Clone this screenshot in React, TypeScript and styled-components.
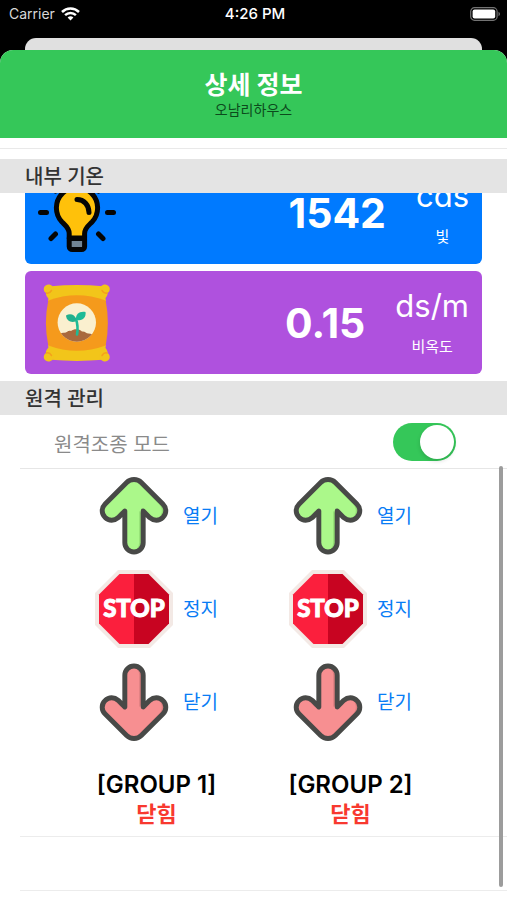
import React, { useId, useState } from "react";
import styled, { createGlobalStyle } from "styled-components";

const GlobalStyle = createGlobalStyle`
  * { box-sizing: border-box; }
  body {
    margin: 0;
    background: #000;
    font-family: Inter, "Noto Sans CJK KR", sans-serif;
    color: #000;
  }
  h1, h2, h3, p { margin: 0; }
`;

const Screen = styled.div`
  display: flex;
  flex-direction: column;
  min-height: 100vh;
`;

const StatusBar = styled.header`
  display: grid;
  grid-template-columns: 1fr auto 1fr;
  align-items: center;
  height: 27px;
  margin-bottom: 11px;
  padding: 0 6px 0 9px;
  color: #fff;
  font-size: 14px;
`;

const Carrier = styled.div`
  display: flex;
  align-items: center;
  gap: 6px;
  color: #d8d8d8;
`;

const Clock = styled.time`
  font-size: 15px;
  font-weight: 500;
`;

const BatterySlot = styled.div`
  display: flex;
  justify-content: flex-end;
`;

const BackSheet = styled.div`
  height: 12px;
  margin: 0 25px;
  border-radius: 11px 11px 0 0;
  background: #e0e0e0;
`;

const Sheet = styled.main`
  display: flex;
  flex: 1;
  flex-direction: column;
  overflow: hidden;
  border-radius: 13px 13px 0 0;
  background: #fff;
`;

const TitleBar = styled.div`
  display: flex;
  flex-direction: column;
  align-items: center;
  height: 88px;
  padding-top: 20px;
  background: #35c759;
`;

const Title = styled.h1`
  color: #fff;
  font-size: 25px;
  font-weight: 700;
  line-height: 30px;
`;

const Subtitle = styled.p`
  color: #0c4a1c;
  font-size: 14px;
  font-weight: 400;
  line-height: 20px;
`;

const TopRule = styled.div`
  height: 11px;
  margin-bottom: 10px;
  border-bottom: 1px solid #e9e9e9;
`;

const SectionTitle = styled.h2`
  height: 34px;
  padding: 2px 0 0 25px;
  background: #e4e4e4;
  color: #333;
  font-size: 20px;
  font-weight: 500;
  line-height: 32px;
`;

const CardViewport = styled.div`
  overflow: hidden;
  padding: 0 25px 7px;
`;

const CardList = styled.div`
  display: flex;
  flex-direction: column;
  gap: 7px;
  margin-top: -32px;
`;

const Card = styled.article<{ $color: string }>`
  display: flex;
  align-items: center;
  height: 103px;
  padding: 0 13px;
  border-radius: 6px;
  background: ${(p) => p.$color};
  color: #fff;
`;

const Reading = styled.strong`
  margin-left: auto;
  margin-right: 30px;
  font-size: 41px;
  font-weight: 700;
  line-height: 36px;
`;

const UnitBlock = styled.div`
  display: flex;
  flex-direction: column;
  align-items: center;
  gap: 12px;
`;

const Unit = styled.span`
  font-size: 31px;
  font-weight: 400;
  line-height: 36px;
`;

const Caption = styled.span`
  font-size: 15px;
  line-height: 22px;
`;

const Remote = styled.section`
  position: relative;
  display: flex;
  flex: 1;
  flex-direction: column;
  padding-left: 20px;
`;

const ModeRow = styled.label`
  display: flex;
  align-items: center;
  justify-content: space-between;
  height: 54px;
  padding: 0 51px 0 34px;
  border-bottom: 1px solid #e6e6e6;
  color: #8a8a8a;
  font-size: 20px;
`;

const ModeText = styled.span`
  padding-top: 4px;
`;

const Switch = styled.input`
  appearance: none;
  display: flex;
  align-items: center;
  width: 63px;
  height: 38px;
  margin: 0;
  padding: 2px;
  border-radius: 19px;
  background: #d8d8dc;
  cursor: pointer;

  &::before {
    content: "";
    width: 34px;
    height: 34px;
    border-radius: 50%;
    background: #fff;
    box-shadow: 0 2px 4px rgba(0, 0, 0, 0.15);
  }
  &:checked {
    justify-content: flex-end;
    background: #35c759;
  }
`;

const GroupRow = styled.div`
  height: 367px;
  margin-left: -20px;
  padding-top: 8px;
`;

const Groups = styled.div`
  display: grid;
  grid-template-columns: 1fr 1fr;
  max-width: 388px;
  margin: 0 auto;
`;

const Group = styled.div`
  display: flex;
  flex-direction: column;
  align-items: center;
  gap: 15px;
`;

const Action = styled.button`
  display: flex;
  align-items: center;
  gap: 10px;
  padding: 0;
  border: 0;
  background: none;
  color: #087cf5;
  font: inherit;
  font-size: 19px;
  line-height: 24px;
  cursor: pointer;
`;

const ActionText = styled.span`
  padding-top: 2px;
`;

const GroupLabel = styled.div`
  padding-top: 15px;
  text-align: center;
`;

const GroupName = styled.h3`
  font-size: 24px;
  font-weight: 600;
  line-height: 28px;
`;

const GroupState = styled.p`
  color: #f8392f;
  font-size: 22px;
  font-weight: 700;
  line-height: 30px;
`;

const EmptyRow = styled.div`
  height: 55px;
  border-top: 1px solid #ececec;
  border-bottom: 1px solid #ececec;
`;

const ScrollThumb = styled.div`
  position: absolute;
  top: 51px;
  right: 4px;
  bottom: 13px;
  width: 4px;
  border-radius: 2px;
  background: #9c9c9c;
`;

const WifiIcon = () => (
  <svg width="19" height="14" viewBox="0 0 19 14" aria-hidden="true">
    <g fill="none" stroke="#fff" strokeWidth="2.5">
      <path d="M1 5a12.2 12.2 0 0 1 17 0" />
      <path d="M4.1 8.2a7.8 7.8 0 0 1 10.8 0" />
    </g>
    <path d="M6.6 10.6a4.2 4.2 0 0 1 5.8 0L9.5 13.6Z" fill="#fff" />
  </svg>
);

const BatteryIcon = () => (
  <svg width="31" height="14" viewBox="0 0 31 14" aria-hidden="true">
    <rect x="0.7" y="0.7" width="26.4" height="12.6" rx="3.8" fill="none" stroke="#737373" strokeWidth="1.2" />
    <rect x="2.6" y="2.5" width="22.6" height="9" rx="2" fill="#fff" />
    <path d="M28.5 4.8c2 .8 2 3.6 0 4.4Z" fill="#737373" />
  </svg>
);

const BulbIcon = () => (
  <svg width="78" height="78" viewBox="0 0 78 78" aria-hidden="true">
    <path
      d="M31.2 64V59.5C31.2 54 27 51 24 48a20.6 20.6 0 1 1 30 0c-3 3-7.4 6-7.4 11.5V64Z"
      fill="#ffc10a"
      stroke="#050505"
      strokeWidth="5"
      strokeLinejoin="round"
    />
    <path d="M31.2 64.5h15.400v8a3 3 0 0 1-3 3h-9.400a3 3 0 0 1-3-3Z" fill="#718493" stroke="#050505" strokeWidth="5" strokeLinejoin="round" />
    <g fill="none" stroke="#050505" strokeWidth="5" strokeLinecap="round">
      <path d="M39 25.500c7 0 12 5.500 12 13" />
      <path d="M2.500 38.500h6M69.500 38.500h6M39 2.500v4" />
      <path d="M13 64.500l4.500-4.500M65 64.500L60.500 60M13 12.500l4.500 4.500M65 12.500L60.500 17" />
    </g>
  </svg>
);

const FertilizerIcon = () => {
  const clip = useId();
  return (
    <svg width="78" height="78" viewBox="0 0 78 78" aria-hidden="true">
      <clipPath id={clip}>
        <circle cx="38.8" cy="38.5" r="19.2" />
      </clipPath>
      <g fill="#f2c51a">
        <path d="M13 2.200Q38.800 0 65 2.200L68 17H10Z" />
        <path d="M13 75.800Q38.800 78 65 75.800L68 61H10Z" />
        <path d="M6.200 3C8 0 12-.5 14.500 2.500l1.500 4-4.500 9C9 13 7.500 11 8 9 6 8 5.200 5 6.200 3Z" />
        <path d="M71.300 3C69.500 0 65.500-.5 63 2.500l-1.500 4 4.500 9c2.500-2.500 4-4.500 3.500-6.500 2-1 2.800-4 1.800-6Z" />
        <path d="M6.200 75c1.800 3 5.800 3.500 8.300.5l1.500-4-4.500-9C9 65 7.500 67 8 69 6 70 5.200 73 6.200 75Z" />
        <path d="M71.300 75c-1.800 3-5.800 3.500-8.300.5l-1.500-4 4.500-9c2.500 2.500 4 4.500 3.500 6.500 2 1 2.800 4 1.800 6Z" />
      </g>
      <path d="M10.300 16.500Q38.800 6 67.700 16.500 72 39 67.700 61.500 38.800 72 10.300 61.500 5.500 39 10.300 16.500Z" fill="#f59a1c" />
      <g fill="none" stroke="#f5a11b" strokeWidth="1.5" strokeLinecap="round">
        <path d="M8.500 9c2 .5 3.500 0 5-2.500M69 9c-2 .5-3.500 0-5-2.500M8.500 69c2-.5 3.500 0 5 2.500M69 69c-2-.5-3.500 0-5 2.500" />
      </g>
      <circle cx="38.8" cy="38.5" r="19.2" fill="#faf0cf" />
      <path clipPath={`url(#${clip})`} d="M18 51.500c3-1 4-3 8-2.800 3 .2 4-2.800 7-1.700 3-2.500 8-2.500 11 .5 3-.5 4 2 6.500 2 3 0 5 1.500 9 2.500V60H18Z" fill="#a9693d" />
      <path d="M39 50.500q1.500-8-1-15.500" fill="none" stroke="#1dbb96" strokeWidth="2.6" strokeLinecap="round" />
      <path d="M37.500 37.500c-5 1.500-9-1-9.500-6 4-2.500 9-1 10 3.500Z" fill="#22b08d" />
      <path d="M38 35.500c-.5-5.500 3.500-8.500 9.500-7.500 1 5-3 9.500-8.500 8Z" fill="#1dbb96" />
    </svg>
  );
};

const ARROW =
  "M39 2.500c-3 0-5.400 1-7.400 3L9.800 27.300c-4 4-4 10 0 13.700 3.700 3.700 9.300 3.600 13.200.2L29.700 34.500V66.700a9.300 9.300 0 0 0 18.600 0V34.500L55 41.200c3.900 3.400 9.500 3.500 13.200-.2 4-3.700 4-9.700 0-13.700L46.400 5.500c-2-2-4.400-3-7.400-3Z";

const ArrowIcon = ({ down = false }: { down?: boolean }) => {
  const clip = useId();
  return (
    <svg width="78" height="78" viewBox="0 0 78 79" aria-hidden="true">
      <clipPath id={clip}>
        <path d={ARROW} />
      </clipPath>
      <g transform={down ? "matrix(1 0 0 -1 0 79)" : undefined}>
        <path d={ARROW} fill={down ? "#dd7f80" : "#92dc74"} />
        <g clipPath={`url(#${clip})`}>
          <path d={ARROW} transform="translate(-4 0)" fill={down ? "#f78f91" : "#abf88a"} />
        </g>
        <path d={ARROW} fill="none" stroke="#484947" strokeWidth="5" strokeLinejoin="round" />
      </g>
    </svg>
  );
};

const StopText = styled.text`
  fill: #fff;
  stroke: #fff;
  stroke-width: 1px;
  font-family: Lato, sans-serif;
  font-size: 24px;
  font-weight: 900;
  text-anchor: middle;
`;

const StopIcon = () => (
  <svg width="78" height="78" viewBox="0 0 78 78" aria-hidden="true">
    <path d="M23 0h32l23 23v32L55 78H23L0 55V23Z" fill="#f3e9e5" />
    <path d="M24.500 4H39v70H24.500L4 53.500v-29Z" fill="#fb1f3d" />
    <path d="M39 4h14.500L74 24.500v29L53.500 74H39Z" fill="#c80421" />
    <StopText x="39" y="47">STOP</StopText>
  </svg>
);

const GROUPS = [
  { name: "[GROUP 1]", state: "닫힘" },
  { name: "[GROUP 2]", state: "닫힘" },
];

export default function App() {
  const [remote, setRemote] = useState(true);
  return (
    <Screen>
      <GlobalStyle />
      <StatusBar>
        <Carrier>
          Carrier
          <WifiIcon />
        </Carrier>
        <Clock>4:26 PM</Clock>
        <BatterySlot>
          <BatteryIcon />
        </BatterySlot>
      </StatusBar>
      <BackSheet />
      <Sheet>
        <TitleBar>
          <Title>상세 정보</Title>
          <Subtitle>오남리하우스</Subtitle>
        </TitleBar>
        <TopRule />
        <SectionTitle>내부 기온</SectionTitle>
        <CardViewport>
          <CardList>
            <Card $color="#007aff">
              <BulbIcon />
              <Reading>1542</Reading>
              <UnitBlock>
                <Unit>cds</Unit>
                <Caption>빛</Caption>
              </UnitBlock>
            </Card>
            <Card $color="#af51de">
              <FertilizerIcon />
              <Reading>0.15</Reading>
              <UnitBlock>
                <Unit>ds/m</Unit>
                <Caption>비옥도</Caption>
              </UnitBlock>
            </Card>
          </CardList>
        </CardViewport>
        <SectionTitle>원격 관리</SectionTitle>
        <Remote>
          <ModeRow>
            <ModeText>원격조종 모드</ModeText>
            <Switch type="checkbox" role="switch" checked={remote} onChange={(e) => setRemote(e.target.checked)} />
          </ModeRow>
          <GroupRow>
            <Groups>
              {GROUPS.map((group) => (
                <Group key={group.name}>
                  <Action type="button">
                    <ArrowIcon />
                    <ActionText>열기</ActionText>
                  </Action>
                  <Action type="button">
                    <StopIcon />
                    <ActionText>정지</ActionText>
                  </Action>
                  <Action type="button">
                    <ArrowIcon down />
                    <ActionText>닫기</ActionText>
                  </Action>
                  <GroupLabel>
                    <GroupName>{group.name}</GroupName>
                    <GroupState>{group.state}</GroupState>
                  </GroupLabel>
                </Group>
              ))}
            </Groups>
          </GroupRow>
          <EmptyRow />
          <ScrollThumb />
        </Remote>
      </Sheet>
    </Screen>
  );
}
